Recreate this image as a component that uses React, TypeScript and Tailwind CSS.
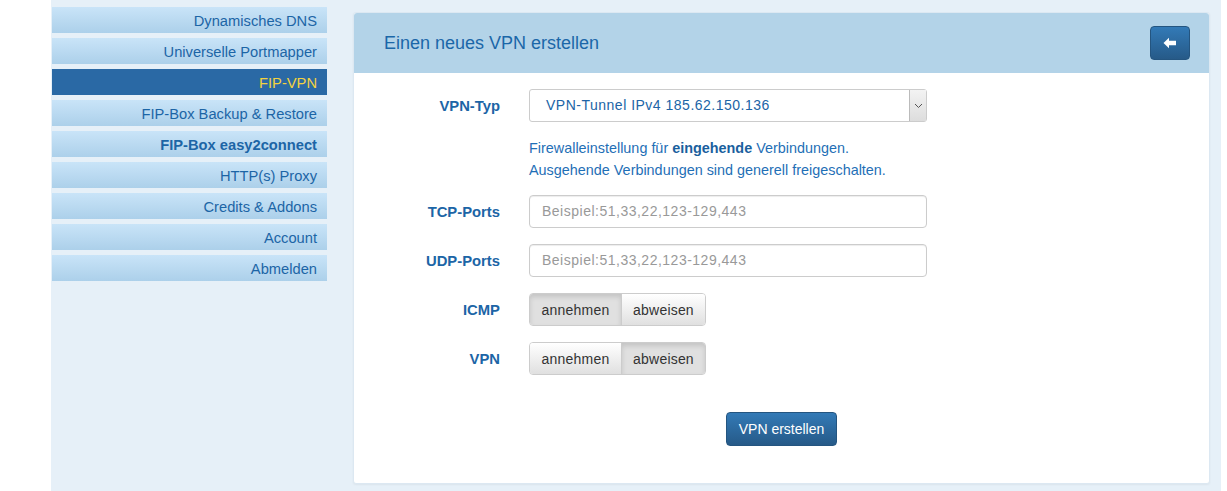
import React from "react";

const items = [
  { t: "Dynamisches DNS" },
  { t: "Universelle Portmapper" },
  { t: "FIP-VPN", active: true },
  { t: "FIP-Box Backup & Restore" },
  { t: "FIP-Box easy2connect", bold: true },
  { t: "HTTP(s) Proxy" },
  { t: "Credits & Addons" },
  { t: "Account" },
  { t: "Abmelden" },
];

function Toggle({ left }: { left: boolean }) {
  const on = "bg-[#e0e0e0] shadow-[inset_0_3px_5px_rgba(0,0,0,0.125)]";
  const off = "bg-gradient-to-b from-[#ffffff] to-[#e0e0e0]";
  return (
    <div className="flex h-[33px] rounded-[4px] border border-[#cccccc] overflow-hidden text-[14px] text-[#333333] tracking-[0.2px]">
      <div className={`w-[92px] pt-[2px] flex items-center justify-center border-r border-[#cccccc] ${left ? on : off}`}>annehmen</div>
      <div className={`w-[83px] pt-[2px] flex items-center justify-center ${left ? off : on}`}>abweisen</div>
    </div>
  );
}

export default function App() {
  return (
    <div className="w-[1227px] h-[491px] bg-white flex font-['Liberation_Sans',Arial,sans-serif]">
      <div className="ml-[51px] w-[1170px] h-[491px] bg-[#e6f0f8] flex">
        <div className="ml-[1px] mt-[7px] w-[275px] flex flex-col gap-[5px]">
          {items.map((it) => (
            <div
              key={it.t}
              className={`h-[26px] flex items-center justify-end pr-[10px] pt-[2px] text-[14.7px] ${
                it.active
                  ? "bg-[#2a69a5] text-[#f3d23f]"
                  : "bg-gradient-to-b from-[#c9e4f8] to-[#acd0ea] text-[#1c65a6]"
              } ${it.bold ? "font-bold" : ""}`}
            >
              {it.t}
            </div>
          ))}
        </div>
        <div className="ml-[26px] mt-[12px] w-[857px] h-[472px] bg-white rounded-[3px] border border-[#dce8f2] shadow-[0_1px_2px_rgba(0,0,0,0.05)] flex flex-col">
          <div className="h-[60px] bg-[#b3d3e8] flex items-center justify-between pl-[30px] pr-[19px] rounded-t-[3px]">
            <div className="text-[18px] text-[#1b67a8]">Einen neues VPN erstellen</div>
            <div className="w-[40px] h-[34px] rounded-[4px] bg-gradient-to-b from-[#337ab7] to-[#265a88] border border-[#245580] flex items-center justify-center">
              <svg width="14" height="12" viewBox="0 0 14 12">
                <path d="M0.5 6 L6 0.8 L6 3.8 L13 3.8 L13 8.2 L6 8.2 L6 11.2 Z" fill="white" />
              </svg>
            </div>
          </div>
          <div className="flex flex-col pt-[16px]">
            <div className="flex items-center h-[33px]">
              <div className="w-[146px] pt-[2px] text-right text-[14.8px] font-bold text-[#1c65a6]">VPN-Typ</div>
              <div className="ml-[29px] w-[398px] h-[33px] rounded-[3px] border border-[#cccccc] flex items-center justify-between">
                <span className="pl-[16px] text-[14px] tracking-[0.5px] text-[#2064a6]">VPN-Tunnel IPv4 185.62.150.136</span>
                <div className="w-[17px] h-full bg-gradient-to-b from-[#f3f3f3] to-[#dddddd] border-l border-[#bbbbbb] flex items-center justify-center">
                  <svg width="9" height="6" viewBox="0 0 9 6"><path d="M1 1 L4.5 4.5 L8 1" stroke="#555" strokeWidth="1" fill="none" /></svg>
                </div>
              </div>
            </div>
            <div className="ml-[175px] mt-[15px] text-[14.4px] leading-[22px] text-[#1f6fb6]">
              <div>Firewalleinstellung für <b className="text-[#1a5f9e]">eingehende</b> Verbindungen.</div>
              <div>Ausgehende Verbindungen sind generell freigeschalten.</div>
            </div>
            <div className="flex items-center h-[33px] mt-[14px]">
              <div className="w-[146px] pt-[2px] text-right text-[14.8px] font-bold text-[#1c65a6]">TCP-Ports</div>
              <div className="ml-[29px] w-[398px] h-[33px] rounded-[4px] border border-[#cccccc] shadow-[inset_0_1px_1px_rgba(0,0,0,0.075)] flex items-center pl-[12px] text-[14px] tracking-[0.5px] text-[#999999]">Beispiel:51,33,22,123-129,443</div>
            </div>
            <div className="flex items-center h-[33px] mt-[16px]">
              <div className="w-[146px] pt-[2px] text-right text-[14.8px] font-bold text-[#1c65a6]">UDP-Ports</div>
              <div className="ml-[29px] w-[398px] h-[33px] rounded-[4px] border border-[#cccccc] shadow-[inset_0_1px_1px_rgba(0,0,0,0.075)] flex items-center pl-[12px] text-[14px] tracking-[0.5px] text-[#999999]">Beispiel:51,33,22,123-129,443</div>
            </div>
            <div className="flex items-center h-[33px] mt-[16px]">
              <div className="w-[146px] pt-[2px] text-right text-[14.8px] font-bold text-[#1c65a6]">ICMP</div>
              <div className="ml-[29px]"><Toggle left={true} /></div>
            </div>
            <div className="flex items-center h-[33px] mt-[16px]">
              <div className="w-[146px] pt-[2px] text-right text-[14.8px] font-bold text-[#1c65a6]">VPN</div>
              <div className="ml-[29px]"><Toggle left={false} /></div>
            </div>
            <div className="mt-[37px] ml-[372px] w-[111px] h-[34px] rounded-[4px] bg-gradient-to-b from-[#337ab7] to-[#265a88] border border-[#245580] flex items-center justify-center text-[14px] text-white">VPN erstellen</div>
          </div>
        </div>
      </div>
    </div>
  );
}
